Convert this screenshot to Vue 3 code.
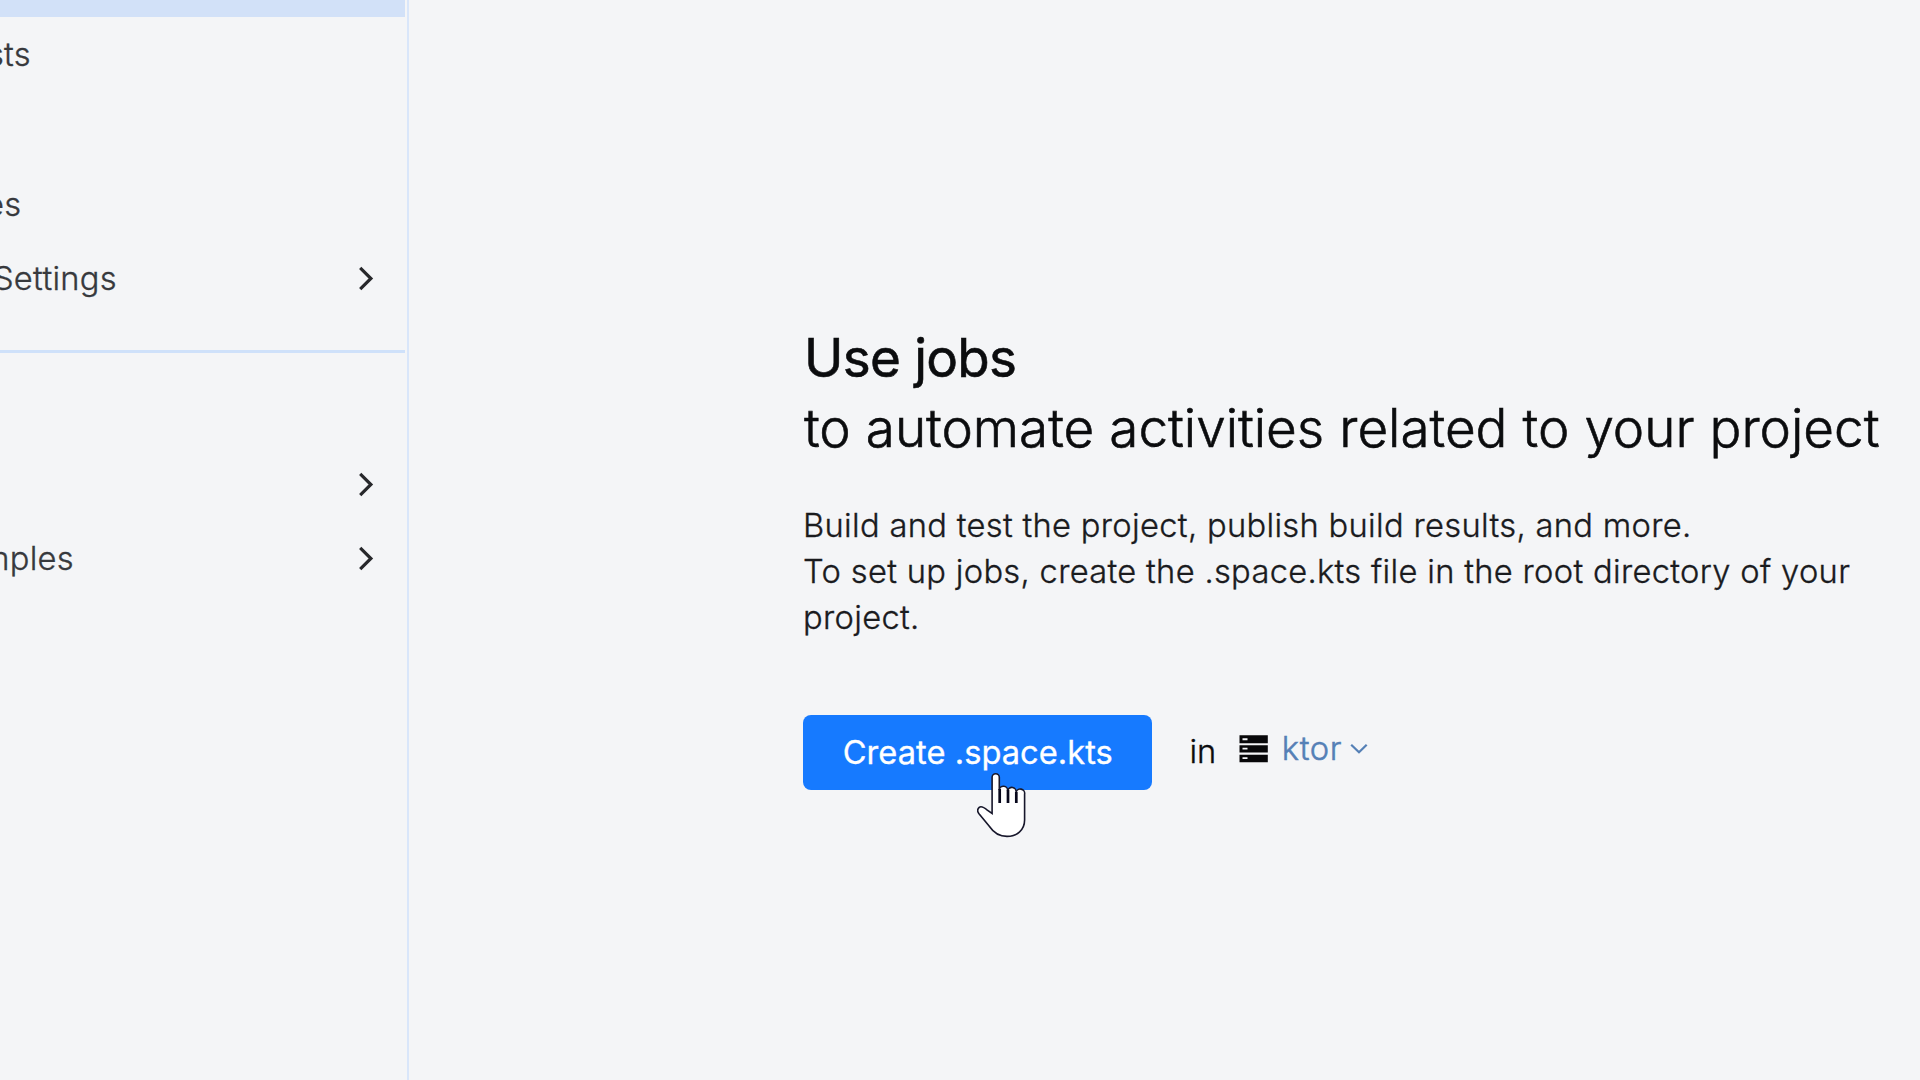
<script setup>
const primary = [
  { label: 'sts', edge: 31 },
  { label: '', edge: 0 },
  { label: 'es', edge: 21.4 },
  { label: 'Settings', edge: 117, expandable: true }
]
const secondary = [
  { label: '', edge: 0, expandable: true },
  { label: 'mples', edge: 74, expandable: true }
]
const groups = [primary, secondary]
</script>

<template>
  <div class="page">
    <aside class="sidebar">
      <div class="active-row"></div>
      <nav v-for="(group, g) in groups" :key="g" class="group">
        <div v-for="(item, i) in group" :key="i" class="item">
          <span class="label" :style="{ width: item.edge + 'px' }">{{ item.label }}</span>
          <svg v-if="item.expandable" class="chevron" width="16" height="26" viewBox="0 0 16 26">
            <path d="M1.2 2.8 11.9 13.5 1.2 24.2" />
          </svg>
        </div>
      </nav>
    </aside>

    <main class="content">
      <h1 class="title">Use jobs</h1>
      <h2 class="subtitle">to automate activities related to your project</h2>
      <p class="text">
        Build and test the project, publish build results, and more.<br />
        To set up jobs, create the .space.kts file in the root directory of your<br />
        project.
      </p>
      <div class="actions">
        <button class="create">
          Create .space.kts
          <svg class="pointer" width="50" height="68" viewBox="0 0 50 68">
            <path
              class="hand"
              d="M15.1 41.5V5.3a3.6 3.6 0 0 1 7.2 0V18a4.1 4.1 0 0 1 8.3 .8 4.1 4.1 0 0 1 8.4 1.8 4 4 0 0 1 8.6 1.6V48C47.6 58.5 39.5 64.4 30 64.4 22.5 64.4 16.500 60.5 12.5 54.5L1.8 41.5C.2 39.3 .6 36.9 2.2 35.4 4.2 33.800 7.5 35.800 10.3 38.2Z"
            />
            <path class="fingers" d="M22.7 17V31M31 18V31M39.3 20V31" />
          </svg>
        </button>
        <span class="in">in</span>
        <a class="repo">
          <svg class="stack" width="30" height="28" viewBox="0 0 30 28">
            <path class="bars" d="M.5 .3h28.3v8H.5zM.5 10.2h28.3v7.4H.5zM.5 19.7h28.3v7.5H.5z" />
            <path class="leds" d="M3.5 3.3h5v2h-5zM3.5 12.7h5v1.9h-5zM3.5 22.2h5v1.9h-5z" />
          </svg>
          <span class="name">ktor</span>
          <svg class="caret" width="18" height="12" viewBox="0 0 18 12">
            <path d="M1.2 1.7 9 9.3 16.7 1.7" />
          </svg>
        </a>
      </div>
    </main>
  </div>
</template>

<style>
body {
  margin: 0;
  background: #f4f5f7;
}
</style>

<style scoped>
.page {
  display: flex;
  width: 1920px;
  height: 1080px;
  overflow: hidden;
  background: #f4f5f7;
  color: #0b0c0e;
  font-family: Inter, "Liberation Sans", sans-serif;
}
.sidebar {
  box-sizing: border-box;
  flex: none;
  width: 409px;
  padding-right: 2px;
  border-right: 2px solid #d9e6fa;
  overflow: hidden;
}
.active-row {
  height: 17px;
  background: #d2e1f8;
}
.group {
  height: 333px;
}
.group + .group {
  padding-top: 93.3px;
  border-top: 3px solid #cfe1fa;
}
.item {
  display: flex;
  align-items: center;
  justify-content: space-between;
  height: 74.67px;
  padding-right: 30.5px;
}
.label {
  display: flex;
  justify-content: flex-end;
  font-size: 32.67px;
  font-weight: 300;
  -webkit-text-stroke: 0.35px currentColor;
  letter-spacing: 0.3px;
  line-height: 40px;
  color: #37393d;
  white-space: nowrap;
}
.chevron path {
  fill: none;
  stroke: #27282b;
  stroke-width: 3.2;
}
.content {
  padding: 323px 0 0 394px;
}
.title,
.subtitle {
  margin: 0;
  height: 70px;
  font-size: 53px;
  line-height: 70px;
  white-space: nowrap;
}
.title {
  padding-left: 1px;
  font-weight: 400;
  letter-spacing: -0.75px;
  -webkit-text-stroke: 0.6px currentColor;
}
.subtitle {
  padding-left: 1px;
  font-weight: 300;
  letter-spacing: -0.02px;
  word-spacing: 0.2px;
  -webkit-text-stroke: 0.6px currentColor;
}
.text {
  margin: 38.5px 0 0;
  font-size: 32.67px;
  font-weight: 300;
  line-height: 46px;
  letter-spacing: 0.32px;
  -webkit-text-stroke: 0.35px currentColor;
  color: #1a1b1e;
  white-space: nowrap;
}
.actions {
  display: flex;
  align-items: center;
  height: 76px;
  margin-top: 75px;
}
.create {
  position: relative;
  width: 348.5px;
  height: 75.5px;
  padding: 0 0 2px 1px;
  border: 0;
  border-radius: 8px;
  background: #167aff;
  color: #fff;
  font: 400 32.67px/40px Inter, "Liberation Sans", sans-serif;
  letter-spacing: 0.02px;
  -webkit-text-stroke: 0.3px currentColor;
}
.pointer {
  position: absolute;
  left: 173.5px;
  top: 57.5px;
}
.hand {
  fill: #fff;
  stroke: #17172b;
  stroke-width: 1.6;
}
.fingers {
  fill: none;
  stroke: #07071b;
  stroke-width: 2.7;
}
.in {
  margin: -3px 0 0 38px;
  font-size: 32.67px;
  font-weight: 300;
  -webkit-text-stroke: 0.35px currentColor;
}
.repo {
  display: flex;
  align-items: center;
  margin: -7px 0 0 23px;
  color: #5580b6;
}
.bars {
  fill: #08080a;
}
.leds {
  fill: #f4f5f7;
}
.name {
  margin: -3px 0 0 12.5px;
  font-size: 32.67px;
  font-weight: 300;
  letter-spacing: 0.6px;
  -webkit-text-stroke: 0.5px currentColor;
}
.caret {
  margin-left: 7.5px;
}
.caret path {
  fill: none;
  stroke: #5580b6;
  stroke-width: 2.2;
}
</style>
